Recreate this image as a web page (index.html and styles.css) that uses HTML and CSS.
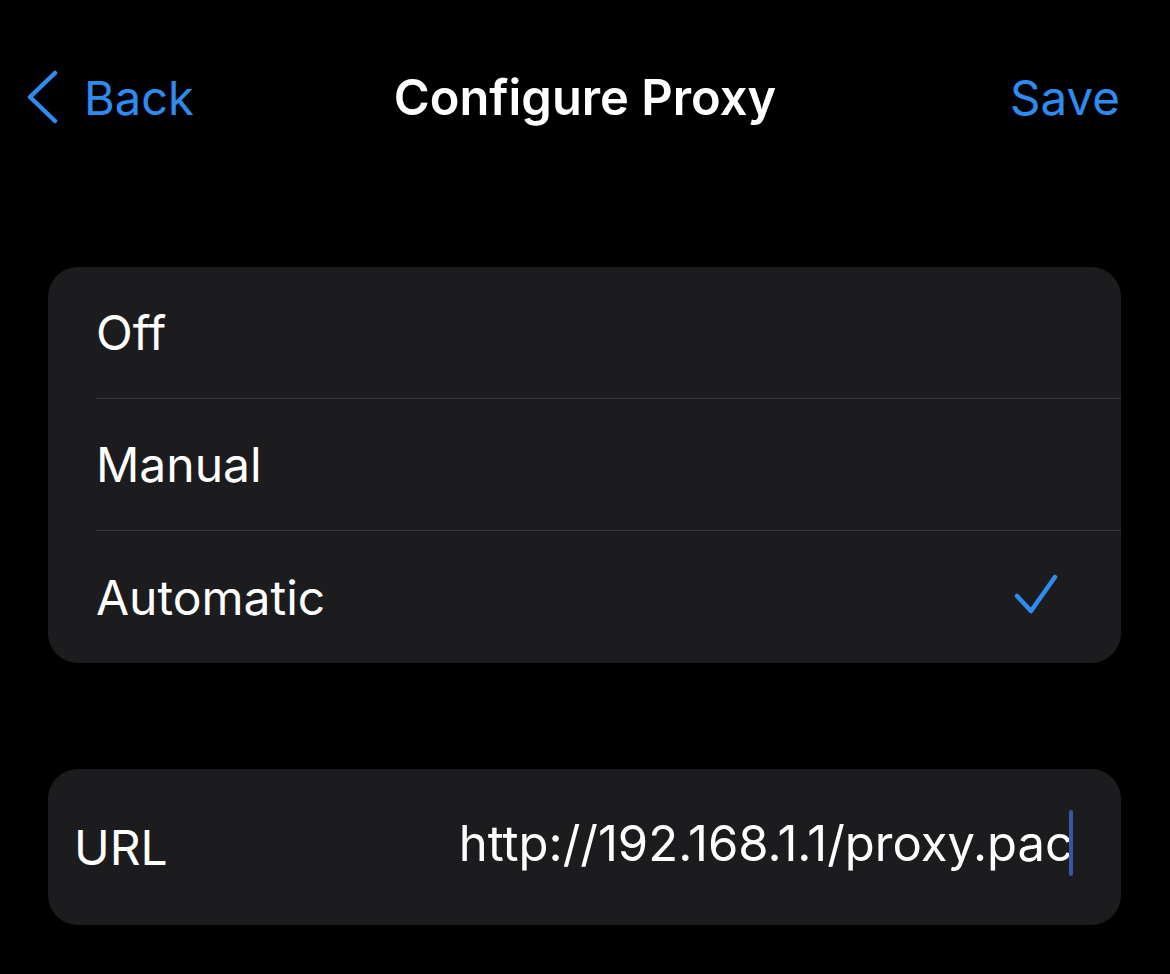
FILE: index.html
```html
<!DOCTYPE html>
<html>
<head>
<meta charset="utf-8">
<link rel="stylesheet" href="styles.css">
</head>
<body>
<div class="screen">
  <header class="nav">
    <div class="nav-back">
      <svg class="chevron" width="32" height="54" viewBox="0 0 32 54"><path d="M29 3 L4 27 L29 51" fill="none" stroke="#2c8cf2" stroke-width="4.5" stroke-linecap="round" stroke-linejoin="round"/></svg>
      <span>Back</span>
    </div>
    <div class="nav-title">Configure Proxy</div>
    <div class="nav-save">Save</div>
  </header>

  <section class="card options">
    <div class="row"><span class="label">Off</span></div>
    <div class="row"><span class="label">Manual</span></div>
    <div class="row"><span class="label">Automatic</span>
      <svg class="check" width="48" height="48" viewBox="0 0 48 48"><path d="M4 22 L18 37 L42 3" fill="none" stroke="#2c8cf2" stroke-width="4.5" stroke-linecap="round" stroke-linejoin="round"/></svg>
    </div>
  </section>

  <section class="card url">
    <span class="url-label">URL</span>
    <span class="url-value">http://192.168.1.1/proxy.pac<span class="cursor"></span></span>
  </section>
</div>
</body>
</html>
```

FILE: styles.css
```css
html, body {
  margin: 0;
  padding: 0;
  background: #000;
}
body {
  font-family: Inter, "Noto Sans", "Liberation Sans", sans-serif;
  color: #fff;
  width: 1170px;
  height: 974px;
  overflow: hidden;
}
.screen {
  display: flex;
  flex-direction: column;
}
.nav {
  display: flex;
  align-items: center;
  justify-content: space-between;
  height: 76px;
  margin-top: 59px;
  padding: 0 50px 0 26px;
  position: relative;
}
.nav-back {
  display: flex;
  align-items: center;
  gap: 26px;
  color: #2c8cf2;
  font-size: 47px;
}
.chevron {
  display: block;
}
.nav-title {
  font-size: 48.8px;
  font-weight: 600;
  position: absolute;
  left: 0;
  right: 0;
  text-align: center;
  pointer-events: none;
}
.nav-save {
  color: #2c8cf2;
  font-size: 47.5px;
}
.card {
  background: #1c1c1e;
  border-radius: 30px;
  margin: 0 49px 0 48px;
}
.options {
  margin-top: 132px;
}
.row {
  height: 132px;
  display: flex;
  align-items: center;
  justify-content: space-between;
  margin-left: 48px;
  padding-left: 0;
  padding-right: 60px;
  border-bottom: 1px solid #38383a;
  box-sizing: border-box;
}
.row:last-child {
  border-bottom: none;
}
.label {
  font-size: 48px;
}
.check {
  display: block;
  position: relative;
  top: 1px;
}
.url {
  margin-top: 106px;
  height: 156px;
  display: flex;
  align-items: center;
  justify-content: space-between;
  padding: 0 48px 0 26px;
}
.url-label {
  font-size: 48px;
}
.url-value {
  font-size: 49px;
}
.cursor {
  display: inline-block;
  width: 4px;
  height: 66px;
  background: #3358a8;
  vertical-align: middle;
  margin-left: -4px;
  position: relative;
  top: -4px;
  border-radius: 2px;
}
```
